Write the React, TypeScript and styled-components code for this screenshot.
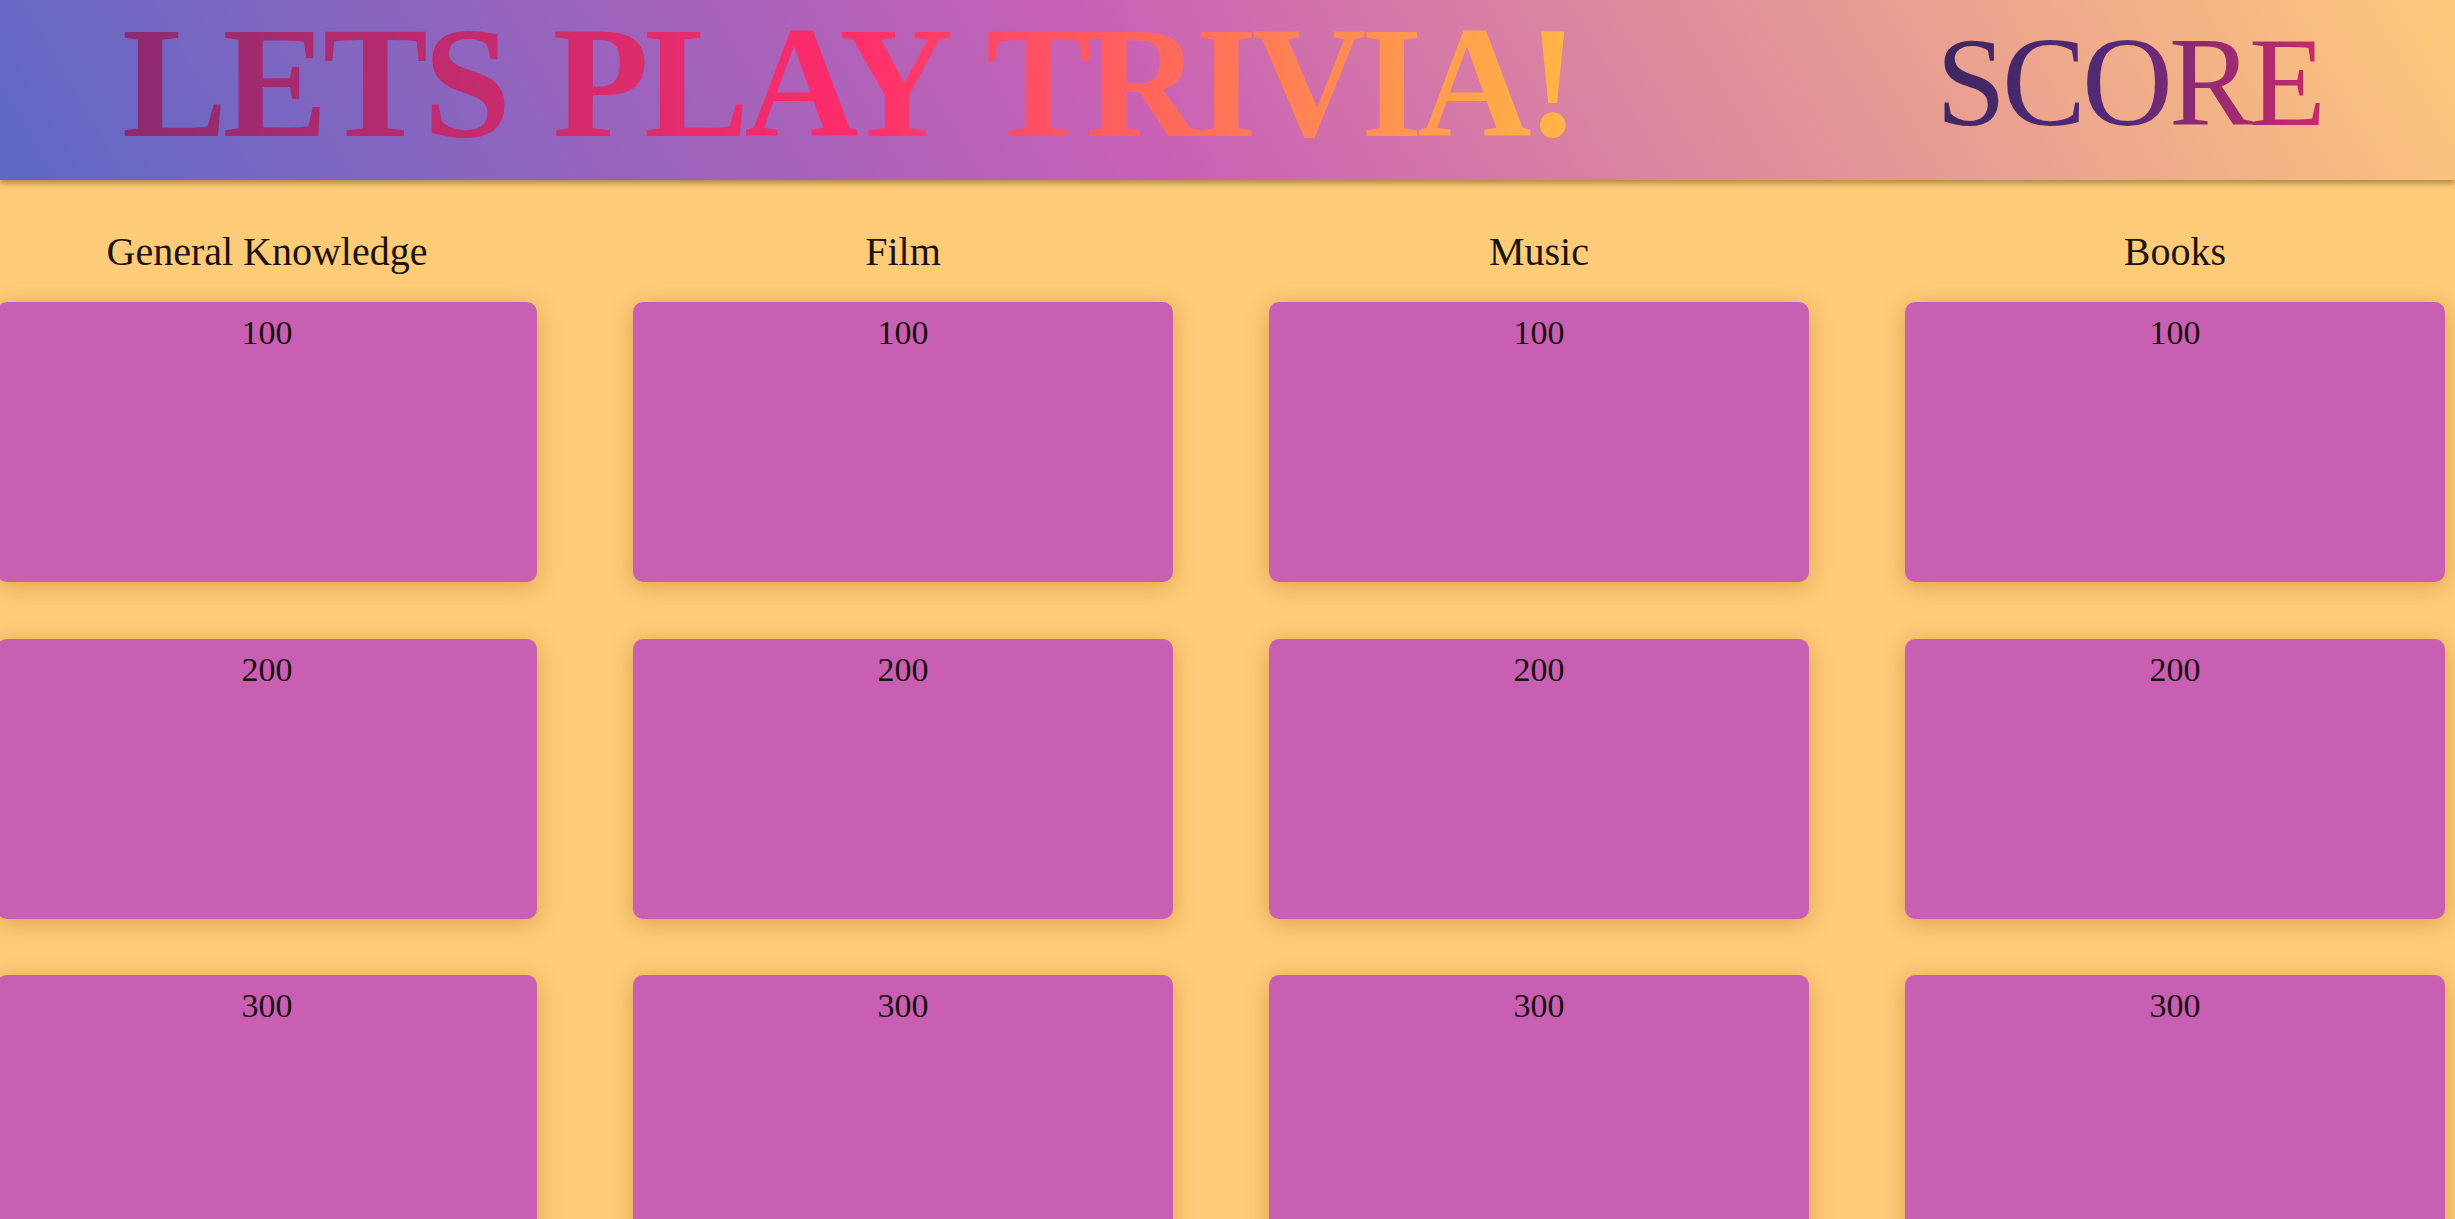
import React from "react";
import styled, { createGlobalStyle } from "styled-components";

const GlobalStyle = createGlobalStyle`
  html, body {
    margin: 0;
    padding: 0;
    background: #fecb78;
    overflow: hidden;
  }
  body {
    font-family: "Liberation Serif", "Times New Roman", serif;
    color: #1b140d;
  }
  * { box-sizing: border-box; }
`;

const Header = styled.header`
  position: relative;
  z-index: 1;
  height: 180px;
  display: flex;
  align-items: center;
  justify-content: space-between;
  padding: 0 133px 14px 122px;
  background: linear-gradient(60deg, #5d69c6 0%, #c960b5 46%, #fec97a 100%);
  box-shadow: 0 3px 6px rgba(70, 45, 0, 0.45);
`;

const Title = styled.h1`
  margin: 0;
  font-size: 158px;
  font-weight: 700;
  line-height: 1.1;
  letter-spacing: -5px;
  word-spacing: 12px;
  white-space: nowrap;
  background: linear-gradient(to right, #8c2a70 0%, #ff2c6b 50%, #ffb746 100%);
  -webkit-background-clip: text;
  background-clip: text;
  color: transparent;
`;

const Score = styled.h2`
  margin: 0;
  font-size: 126px;
  font-weight: 400;
  line-height: 1.1;
  letter-spacing: -4px;
  white-space: nowrap;
  background: linear-gradient(
    to right,
    #3e2860 0%,
    #56297a 50%,
    #8c2a73 66%,
    #c82a6b 100%
  );
  -webkit-background-clip: text;
  background-clip: text;
  color: transparent;
`;

const Board = styled.main`
  display: grid;
  grid-template-columns: repeat(4, 539.4px);
  column-gap: 96.6px;
  margin-left: -2.7px;
  padding-top: 52px;
`;

const Category = styled.section`
  display: flex;
  flex-direction: column;
`;

const CategoryTitle = styled.h3`
  margin: 0 0 30px;
  font-size: 40px;
  font-weight: 400;
  line-height: 1;
  text-align: center;
  color: #1b140d;
`;

const CardList = styled.div`
  display: flex;
  flex-direction: column;
  gap: 56.5px;
`;

const Card = styled.div`
  height: 280px;
  padding-top: 14px;
  background: #c85fb3;
  border-radius: 10px;
  box-shadow: 0 4px 22px rgba(170, 105, 20, 0.4);
  font-size: 34px;
  line-height: 1;
  text-align: center;
  color: #1b1210;
`;

const categories = ["General Knowledge", "Film", "Music", "Books"];
const values = [100, 200, 300];

export default function App() {
  return (
    <>
      <GlobalStyle />
      <Header>
        <Title>LETS PLAY TRIVIA!</Title>
        <Score>SCORE</Score>
      </Header>
      <Board>
        {categories.map((cat) => (
          <Category key={cat}>
            <CategoryTitle>{cat}</CategoryTitle>
            <CardList>
              {values.map((v) => (
                <Card key={v}>{v}</Card>
              ))}
            </CardList>
          </Category>
        ))}
      </Board>
    </>
  );
}
